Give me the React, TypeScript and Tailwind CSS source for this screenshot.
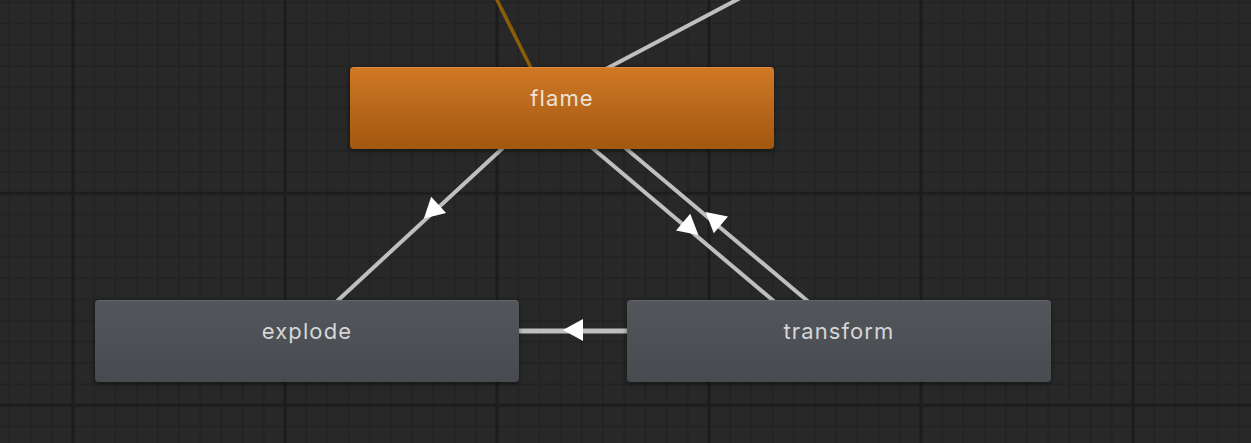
import React from 'react'

type Pt = [number, number]

// triangle pointing along the given angle (degrees), centred on c
const arrowPoints = (c: Pt, deg: number) => {
  const a = (deg * Math.PI) / 180
  const dx = Math.cos(a)
  const dy = Math.sin(a)
  const tip: Pt = [c[0] + 11 * dx, c[1] + 11 * dy]
  const b1: Pt = [c[0] - 9 * dx - 11 * dy, c[1] - 9 * dy + 11 * dx]
  const b2: Pt = [c[0] - 9 * dx + 11 * dy, c[1] - 9 * dy - 11 * dx]
  return [tip, b1, b2].map((p) => p.join(',')).join(' ')
}

const transitions: { from: Pt; to: Pt; w: number }[] = [
  { from: [744, -4], to: [604, 70], w: 4 },
  { from: [506, 145], to: [334, 304], w: 4 },
  { from: [590, 146], to: [776, 303], w: 4 },
  { from: [623, 146], to: [810, 303], w: 4 },
  { from: [512, 331], to: [634, 331], w: 5 },
]

const arrows: { c: Pt; deg: number }[] = [
  { c: [432, 211], deg: 137.4 },
  { c: [690, 228], deg: 40.3 },
  { c: [714, 219], deg: 220.1 },
  { c: [574, 330], deg: 180 },
]

const StateNode = ({
  label,
  className,
}: {
  label: string
  className: string
}) => (
  <div
    className={`absolute w-[424px] h-[82px] rounded-[4px] flex justify-center pt-[17px] shadow-[0_2px_5px_rgba(0,0,0,0.45)] ${className}`}
  >
    <span className="text-[22px] leading-[27px] font-['Inter','DejaVu_Sans',sans-serif] tracking-[1.1px]">
      {label}
    </span>
  </div>
)

const App = () => {
  return (
    <div className="relative w-[1251px] h-[443px] overflow-hidden bg-[#282828]">
      <svg className="absolute inset-0" width="1251" height="443">
        <defs>
          <pattern id="minor" x="9.4" y="2.5" width="21.2" height="21.2" patternUnits="userSpaceOnUse">
            <rect width="21.2" height="21.2" fill="#282828" />
            <rect x="-1" width="2" height="21.2" fill="#232323" />
            <rect x="20.2" width="2" height="21.2" fill="#232323" />
            <rect y="-1" width="21.2" height="2" fill="#232323" />
            <rect y="20.2" width="21.2" height="2" fill="#232323" />
          </pattern>
          <pattern id="major" x="73" y="193.3" width="212" height="212" patternUnits="userSpaceOnUse">
            <rect x="-1.5" width="3" height="212" fill="#1c1c1c" />
            <rect x="210.5" width="3" height="212" fill="#1c1c1c" />
            <rect y="-1.5" width="212" height="3" fill="#1c1c1c" />
            <rect y="210.5" width="212" height="3" fill="#1c1c1c" />
          </pattern>
        </defs>
        <rect width="1251" height="443" fill="url(#minor)" />
        <rect width="1251" height="443" fill="url(#major)" />

        <line x1="496" y1="-2" x2="532" y2="70" stroke="#8d5d06" strokeWidth="3.5" />
        {transitions.map((t, i) => (
          <line
            key={i}
            x1={t.from[0]}
            y1={t.from[1]}
            x2={t.to[0]}
            y2={t.to[1]}
            stroke="#bfbfbf"
            strokeWidth={t.w}
          />
        ))}
        {arrows.map((a, i) => (
          <polygon key={i} points={arrowPoints(a.c, a.deg)} fill="#ffffff" />
        ))}
      </svg>

      <StateNode
        label="flame"
        className="left-[350px] top-[67px] bg-[linear-gradient(#cf7826,#a2570f)] border-t border-[#dc8b3e] text-[#ebe3d8]"
      />
      <StateNode
        label="explode"
        className="left-[95px] top-[300px] bg-[linear-gradient(#53565b,#474a4f)] border-t border-[#62656a] text-[#d6d6d6]"
      />
      <StateNode
        label="transform"
        className="left-[627px] top-[300px] bg-[linear-gradient(#53565b,#474a4f)] border-t border-[#62656a] text-[#d6d6d6]"
      />
    </div>
  )
}

export default App
